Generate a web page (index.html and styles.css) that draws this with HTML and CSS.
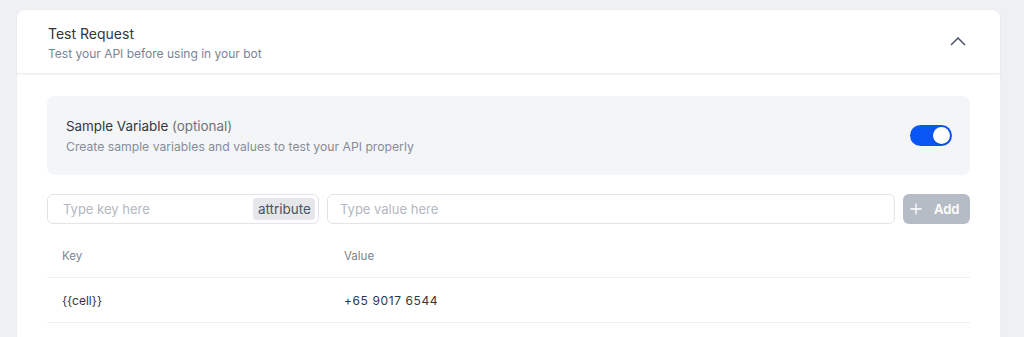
FILE: index.html
```html
<!DOCTYPE html>
<html lang="en">
<head>
  <meta charset="UTF-8" />
  <title>Test Request</title>
  <link rel="stylesheet" href="styles.css">
</head>
<body>
  <div class="card">
    <div class="card-header">
      <div>
        <h3 class="title">Test Request</h3>
        <div class="subtitle">Test your API before using in your bot</div>
      </div>
      <svg class="chevron" width="16" height="9" viewBox="0 0 16 9">
        <path d="M1 8 L8 1 L15 8" fill="none" stroke="#4b5563" stroke-width="1.5" />
      </svg>
    </div>

    <div class="card-body">
      <div class="sample-box">
        <div>
          <div class="sample-title">Sample Variable <span class="optional">(optional)</span></div>
          <div class="sample-desc">Create sample variables and values to test your API properly</div>
        </div>
        <div class="toggle"><div class="knob"></div></div>
      </div>

      <div class="input-row">
        <div class="field key-field">
          <input type="text" placeholder="Type key here" />
          <span class="tag">attribute</span>
        </div>
        <div class="field value-field">
          <input type="text" placeholder="Type value here" />
        </div>
        <button class="add-btn">
          <svg class="plus" width="12" height="12" viewBox="0 0 12 12">
            <path d="M6 0.5 V11.5 M0.5 6 H11.5" stroke="#fff" stroke-width="1.3" />
          </svg>
          Add
        </button>
      </div>

      <div class="table">
        <div class="row head">
          <div>Key</div>
          <div>Value</div>
        </div>
        <div class="row">
          <div>{{cell}}</div>
          <div class="phone">+65 9017 6544</div>
        </div>
      </div>
    </div>
  </div>
</body>
</html>
```

FILE: styles.css
```css
body {
  margin: 0;
  padding: 10px 24px 0 17px;
  background: #eef0f3;
  font-family: Inter, "Noto Sans", sans-serif;
  color: #374151;
}

.card {
  background: #fff;
  border-radius: 8px 8px 0 0;
  height: 340px;
  box-shadow: 0 0 2px rgba(0, 0, 0, 0.04);
}

.card-header {
  display: flex;
  align-items: center;
  justify-content: space-between;
  padding: 0 34px 0 31px;
  height: 63px;
  border-bottom: 1px solid #eceef1;
  box-shadow: 0 1px 2px rgba(0, 0, 0, 0.04);
}

.title {
  margin: 2px 0 4px;
  font-size: 14px;
  font-weight: 400;
  color: #2f3742;
}

.subtitle {
  font-size: 12px;
  color: #7b8491;
}

.card-body {
  padding: 22px 30px 0 30px;
}

.sample-box {
  display: flex;
  align-items: center;
  justify-content: space-between;
  background: #f4f5f7;
  border-radius: 8px;
  height: 79px;
  padding: 0 18px 0 19px;
}

.sample-title {
  font-size: 13.4px;
  color: #2f3742;
  margin: 1px 0 5px;
}

.optional {
  color: #6b7280;
}

.sample-desc {
  font-size: 12.2px;
  color: #858d99;
}

.toggle {
  width: 42px;
  height: 21px;
  border-radius: 11px;
  background: #0a56f5;
  position: relative;
}

.knob {
  position: absolute;
  right: 2px;
  top: 2px;
  width: 17px;
  height: 17px;
  border-radius: 50%;
  background: #fff;
  box-shadow: 0 1px 2px rgba(0, 0, 0, 0.2);
}

.input-row {
  display: flex;
  gap: 8px;
  margin-top: 19px;
  height: 30px;
}

.field {
  display: flex;
  align-items: center;
  border: 1px solid #e2e4ea;
  border-radius: 6px;
  box-sizing: border-box;
  padding: 0 3px 0 15px;
  background: #fff;
}

.key-field {
  width: 272px;
}

.value-field {
  flex: 1;
  padding-left: 12px;
}

.field input {
  flex: 1;
  min-width: 0;
  padding: 0;
  border: none;
  outline: none;
  font-family: inherit;
  font-size: 13px;
  color: #374151;
  background: transparent;
}

.field input::placeholder {
  color: #b3b8c1;
}

.tag {
  background: #e5e7eb;
  color: #4b5563;
  font-size: 13.5px;
  padding: 3px 4px 3px 5px;
  border-radius: 4px;
}

.add-btn {
  display: flex;
  align-items: center;
  width: 67px;
  border: none;
  border-radius: 6px;
  background: #b6bcc6;
  color: #fff;
  font-family: inherit;
  font-size: 13px;
  font-weight: 600;
  padding: 0 0 0 7px;
}

.plus {
  margin-right: 12px;
}

.table {
  margin-top: 10px;
}

.row {
  display: grid;
  grid-template-columns: 282px 1fr;
  height: 44px;
  align-items: center;
  border-bottom: 1px solid #eceef1;
  font-size: 12px;
  color: #2f3742;
}

.row > div {
  padding-left: 15px;
}

.row .phone {
  letter-spacing: 0.6px;
}

.row.head {
  color: #7b8491;
  font-size: 11.5px;
  height: 43px;
}
```
